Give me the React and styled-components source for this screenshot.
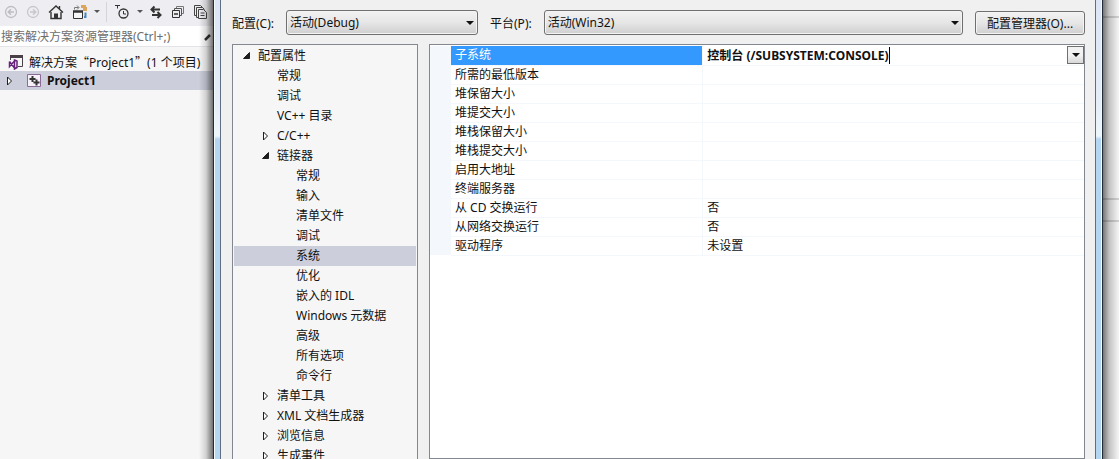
import React, { useState } from "react";
import styled, { createGlobalStyle, css } from "styled-components";

const tree = [
  { label: "配置属性", level: 0, state: "open" },
  { label: "常规", level: 1 },
  { label: "调试", level: 1 },
  { label: "VC++ 目录", level: 1 },
  { label: "C/C++", level: 1, state: "closed" },
  { label: "链接器", level: 1, state: "open" },
  { label: "常规", level: 2 },
  { label: "输入", level: 2 },
  { label: "清单文件", level: 2 },
  { label: "调试", level: 2 },
  { label: "系统", level: 2 },
  { label: "优化", level: 2 },
  { label: "嵌入的 IDL", level: 2 },
  { label: "Windows 元数据", level: 2 },
  { label: "高级", level: 2 },
  { label: "所有选项", level: 2 },
  { label: "命令行", level: 2 },
  { label: "清单工具", level: 1, state: "closed" },
  { label: "XML 文档生成器", level: 1, state: "closed" },
  { label: "浏览信息", level: 1, state: "closed" },
  { label: "生成事件", level: 1, state: "closed" },
];

const properties = [
  ["所需的最低版本", ""],
  ["堆保留大小", ""],
  ["堆提交大小", ""],
  ["堆栈保留大小", ""],
  ["堆栈提交大小", ""],
  ["启用大地址", ""],
  ["终端服务器", ""],
  ["从 CD 交换运行", "否"],
  ["从网络交换运行", "否"],
  ["驱动程序", "未设置"],
];

function Arrow({ state }) {
  return (
    <svg width="9" height="10" viewBox="0 0 9 10" aria-hidden="true">
      {state === "open" && <path d="M7.5 1.5v6h-6z" fill="#1e1e1e" stroke="#1e1e1e" />}
      {state === "closed" && (
        <path d="M2.5 1l4 4-4 4z" fill="#fff" stroke="#1e1e1e" />
      )}
    </svg>
  );
}

function SolutionExplorer() {
  return (
    <Explorer>
      <Toolbar>
        <ToolButton aria-label="后退">
          <svg width="14" height="14" viewBox="0 0 14 14" fill="none" stroke="#bdbdc2">
            <circle cx="7" cy="7" r="5.5" strokeWidth="1.3" />
            <path d="M10 7H4.5M7 4.2L4.2 7 7 9.800" strokeWidth="1.5" />
          </svg>
        </ToolButton>
        <ToolButton aria-label="前进">
          <svg width="14" height="14" viewBox="0 0 14 14" fill="none" stroke="#c8c8cc">
            <circle cx="7" cy="7" r="5.5" strokeWidth="1.3" />
            <path d="M4 7h5.5M7 4.2L9.8 7 7 9.800" strokeWidth="1.5" />
          </svg>
        </ToolButton>
        <ToolButton aria-label="主页">
          <svg width="16" height="16" viewBox="0 0 16 16" fill="none" stroke="#333">
            <path d="M1 8.500L8 2l7 6.500M11.500 5V2" strokeWidth="1.4" />
            <path d="M3 8v6.500h10V8" strokeWidth="1.4" />
            <path d="M6 9.500h4V15H6z" fill="#333" stroke="none" />
          </svg>
        </ToolButton>
        <ToolButton aria-label="同步">
          <svg width="16" height="16" viewBox="0 0 16 16" fill="none">
            <path d="M2.500 5.500V3.500h4M5 1.500l2 2-2 2" stroke="#777" />
            <path d="M9 1h5v2h1v4h-4V4H9z" fill="#dca55c" />
            <path d="M13.500 8.500v4.500H12" stroke="#4a86b8" strokeWidth="2" />
            <path d="M1.500 7.500h9v7h-9z" fill="#f6f6f6" stroke="#333" />
            <path d="M1 7.500h10" stroke="#333" strokeWidth="2.500" />
          </svg>
        </ToolButton>
        <Caret />
        <Separator />
        <ToolButton aria-label="挂起的更改筛选器">
          <svg width="16" height="16" viewBox="0 0 16 16" fill="none" stroke="#333">
            <path d="M0 1.500h5M2.500 1.500V4.500" />
            <circle cx="8.500" cy="9.500" r="4.500" strokeWidth="1.3" />
            <path d="M8.500 7v3H11" />
          </svg>
        </ToolButton>
        <Caret />
        <ToolButton aria-label="与活动文档同步">
          <svg width="14" height="14" viewBox="0 0 14 14" fill="none" stroke="#333" strokeWidth="2">
            <path d="M3 4.500h8M5.500 1.500l-3 3 3 3M3 10h8M8.500 7l3 3-3 3" />
          </svg>
        </ToolButton>
        <ToolButton aria-label="全部折叠">
          <svg width="14" height="14" viewBox="0 0 14 14" fill="none" stroke="#333">
            <path d="M5.500 3.500v-2h7v7h-2" stroke="#777" />
            <path d="M3.500 5.500v-2h7v7h-2" stroke="#555" />
            <path d="M1.500 5.500h7v7h-7z" />
            <path d="M3 9h4" strokeWidth="1.5" />
          </svg>
        </ToolButton>
        <ToolButton aria-label="显示所有文件">
          <svg width="16" height="16" viewBox="0 0 16 16" fill="none" stroke="#444">
            <path d="M3.500 11.500h-2v-10h6l2 2M5.500 13.500h-2v-10h6l2 2" />
            <path d="M5.500 5.500h5l3 3v6h-8zM7.500 9h4M7.500 11.500h4" />
          </svg>
        </ToolButton>
      </Toolbar>
      <SearchBox>
        <Search aria-label="搜索" placeholder="搜索解决方案资源管理器(Ctrl+;)" />
        <svg width="8" height="14" viewBox="0 0 8 14" aria-hidden="true">
          <path d="M1 11L6 6" stroke="#333" strokeWidth="2.5" />
        </svg>
      </SearchBox>
      <SolutionList>
        <SolutionRow>
          <svg width="16" height="16" viewBox="0 0 16 16" aria-hidden="true">
            <path d="M2.500 6V2.500h12v10H10" fill="none" stroke="#4a4048" />
            <path d="M2 2.500h13" stroke="#4a4048" strokeWidth="3" />
            <path d="M1.500 7.500v5L6.500 7M1.500 7.500l5 6.500M6.500 6l2.500 1v6.500L6.500 15z" fill="none" stroke="#68217a" strokeWidth="1.5" />
          </svg>
          <span>
            解决方案<Cjk>“</Cjk>Project1<Cjk>”</Cjk>(1 个项目)
          </span>
        </SolutionRow>
        <ProjectRow>
          <Arrow state="closed" />
          <svg width="15" height="15" viewBox="0 0 15 15" aria-hidden="true">
            <path d="M.5 1.500h13v12H.5z" fill="#f6f0f8" stroke="#8a6a96" />
            <path d="M5.500 3v6M2.500 6h6M9.500 6.500v6M6.500 9.500h6" stroke="#333" strokeWidth="2" />
          </svg>
          <span>Project1</span>
        </ProjectRow>
      </SolutionList>
    </Explorer>
  );
}

function PropertyTree() {
  const [selected, setSelected] = useState(10);
  return (
    <Tree role="tree" aria-label="配置属性">
      {tree.map((item, i) => (
        <TreeItem
          key={i}
          role="treeitem"
          aria-selected={i === selected}
          $level={item.level}
          $selected={i === selected}
          onClick={() => setSelected(i)}
        >
          <Arrow state={item.state} />
          <span>{item.label}</span>
        </TreeItem>
      ))}
    </Tree>
  );
}

function PropertyGrid() {
  const [subsystem, setSubsystem] = useState("控制台 (/SUBSYSTEM:CONSOLE)");
  return (
    <GridPanel>
      <Grid>
        <thead>
          <tr>
            <GutterHead />
            <NameHead />
            <th />
          </tr>
        </thead>
        <tbody>
          <tr>
            <Gutter />
            <NameCell $selected>
              <label htmlFor="subsystem">子系统</label>
            </NameCell>
            <ValueCell>
              <Editor>
                <EditorInput
                  id="subsystem"
                  value={subsystem}
                  onChange={(e) => setSubsystem(e.target.value)}
                />
                <TextCursor />
                <DropButton aria-label="展开">
                  <Caret />
                </DropButton>
              </Editor>
            </ValueCell>
          </tr>
          {properties.map(([name, value]) => (
            <tr key={name}>
              <Gutter />
              <NameCell>{name}</NameCell>
              <ValueCell>{value}</ValueCell>
            </tr>
          ))}
        </tbody>
      </Grid>
    </GridPanel>
  );
}

function App() {
  return (
    <Window>
      <GlobalStyle />
      <SolutionExplorer />
      <DialogFrame>
        <Dialog>
          <ConfigBar>
            <label htmlFor="config">配置(C):</label>
            <Combo $width="192px">
              <select id="config">
                <option>活动(Debug)</option>
              </select>
              <Caret />
            </Combo>
            <label htmlFor="platform">平台(P):</label>
            <Combo>
              <select id="platform">
                <option>活动(Win32)</option>
              </select>
              <Caret />
            </Combo>
            <ManagerButton>配置管理器(O)...</ManagerButton>
          </ConfigBar>
          <Panels>
            <PropertyTree />
            <PropertyGrid />
          </Panels>
        </Dialog>
      </DialogFrame>
      <Backdrop>
        <BackdropLine $space={16} />
        <BackdropLine $space={180} />
        <BackdropLine $space={20} />
      </Backdrop>
    </Window>
  );
}

const GlobalStyle = createGlobalStyle`
  * {
    box-sizing: border-box;
  }
  body {
    margin: 0;
    overflow: hidden;
  }
  body, button, input, select {
    font-family: "Noto Sans", "Noto Sans CJK SC", sans-serif;
    font-size: 12px;
    color: #111;
  }
`;

const Window = styled.div`
  display: flex;
  height: 100vh;
  overflow: hidden;
  background: #f6f6f6;
`;

const Explorer = styled.aside`
  position: relative;
  flex: 0 0 213px;
  display: flex;
  flex-direction: column;
  overflow: hidden;
  &::after {
    content: "";
    position: absolute;
    inset: 0 0 0 auto;
    width: 14px;
    background: linear-gradient(to right, transparent, rgba(0, 0, 0, 0.15) 50%, rgba(0, 0, 0, 0.55));
    pointer-events: none;
  }
`;

const Toolbar = styled.div`
  display: flex;
  align-items: center;
  gap: 8px;
  height: 26px;
  flex-shrink: 0;
  padding: 0 4px 3px;
  background: #eeeef2;
`;

const ToolButton = styled.button`
  display: flex;
  padding: 0;
  border: 0;
  background: none;
`;

const Caret = styled.span`
  flex: none;
  border: solid transparent;
  border-width: 4px 4px 0;
  border-top-color: #111;
  pointer-events: none;
  ${Toolbar} & {
    margin: 0 -2px;
    border-width: 3px 3px 0;
    border-top-color: #555;
  }
`;

const Separator = styled.span`
  width: 1px;
  height: 20px;
  background: #d4d4da;
`;

const SearchBox = styled.div`
  display: flex;
  align-items: center;
  height: 21px;
  flex-shrink: 0;
  padding: 0 1px;
  border-bottom: 1px solid #e4e4e8;
  background: #fff;
`;

const Search = styled.input`
  flex: 1;
  min-width: 0;
  padding: 0;
  border: 0;
  background: none;
  &::placeholder {
    color: #6d6d6d;
    opacity: 1;
  }
`;

const SolutionList = styled.div`
  padding-top: 5px;
`;

const SolutionRow = styled.div`
  display: flex;
  align-items: center;
  gap: 5px;
  height: 19px;
  padding-left: 8px;
  white-space: nowrap;
`;

const ProjectRow = styled(SolutionRow)`
  padding-left: 5px;
  background: #cccedb;
  font-weight: 700;
  svg + svg {
    margin-left: 8px;
  }
`;

const Cjk = styled.span`
  font-family: "Noto Sans CJK SC", sans-serif;
`;

const glass = css`
  background: linear-gradient(#dbe5f5, #e4edf8 100px, #eef6fc 136px, #b5d6f1 139px);
`;

const DialogFrame = styled.div`
  flex: 1;
  min-width: 0;
  display: flex;
  padding: 0 6px;
  border: solid #222c38;
  border-width: 0 1px;
  box-shadow: inset 1px 0 #f4f9fd, inset -1px 0 #f4f9fd;
  ${glass}
`;

const Dialog = styled.main`
  flex: 1;
  min-width: 0;
  display: flex;
  flex-direction: column;
  padding: 10px 10px 0 11px;
  border: solid #5d6f80;
  border-width: 0 1px;
  background: #f0f0f0;
`;

const ConfigBar = styled.div`
  display: flex;
  align-items: center;
  gap: 12px;
  height: 25px;
  flex-shrink: 0;
  white-space: nowrap;
`;

const buttonFace = css`
  border: 1px solid #707070;
  border-radius: 3px;
  background: linear-gradient(#f2f2f2, #e6e6e6 50%, #cfcfcf);
  box-shadow: inset 0 0 0 1px #f4f4f4;
`;

const Combo = styled.div`
  position: relative;
  flex: ${(p) => (p.$width ? `0 0 ${p.$width}` : "1")};
  select {
    display: block;
    width: 100%;
    height: 25px;
    padding: 0 3px;
    appearance: none;
    ${buttonFace}
  }
  ${Caret} {
    position: absolute;
    right: 4px;
    top: 11px;
  }
`;

const ManagerButton = styled.button`
  width: 110px;
  height: 24px;
  padding: 0;
  ${buttonFace}
`;

const Panels = styled.div`
  flex: 1;
  min-height: 0;
  display: flex;
  gap: 11px;
  padding-top: 9px;
`;

const Tree = styled.ul`
  flex: 0 0 186px;
  margin: 0;
  padding: 1px;
  border: 1px solid #828790;
  border-bottom: 0;
  background: #f6f6f6;
  list-style: none;
  overflow: hidden;
`;

const TreeItem = styled.li`
  display: flex;
  align-items: center;
  gap: 7px;
  height: 20px;
  padding-left: ${(p) => 8 + p.$level * 19}px;
  line-height: 18px;
  white-space: nowrap;
  background: ${(p) => (p.$selected ? "#cccedb" : "transparent")};
`;

const GridPanel = styled.div`
  flex: 1;
  min-width: 0;
  padding-top: 1px;
  border: 1px solid #828790;
  background: #fff;
  overflow: hidden;
`;

const Grid = styled.table`
  width: 100%;
  table-layout: fixed;
  border-collapse: collapse;
  th {
    height: 0;
    padding: 0;
  }
  td {
    height: 19px;
    padding: 0 3px 0 4px;
    line-height: 18px;
    white-space: nowrap;
  }
`;

const GutterHead = styled.th`
  width: 21px;
`;

const NameHead = styled.th`
  width: 38.5%;
`;

const Gutter = styled.td`
  background: #f4f7fc;
`;

const NameCell = styled.td`
  border-bottom: 1px solid #f4f7fc;
  ${(p) =>
    p.$selected &&
    css`
      background: #3399ff;
      color: #fff;
    `}
`;

const ValueCell = styled.td`
  border-left: 1px solid #f4f7fc;
  border-bottom: 1px solid #f4f7fc;
`;

const Editor = styled.div`
  display: flex;
  align-items: center;
  height: 18px;
  margin-right: -3px;
`;

const EditorInput = styled.input`
  field-sizing: content;
  min-width: 0;
  height: 18px;
  padding: 0;
  border: 0;
  outline: 0;
  font-weight: 700;
`;

const TextCursor = styled.span`
  width: 1px;
  height: 17px;
  background: #000;
`;

const DropButton = styled.button`
  display: flex;
  align-items: center;
  justify-content: center;
  width: 17px;
  height: 18px;
  margin-left: auto;
  padding: 0;
  border: 1px solid #707070;
  background: linear-gradient(#f2f2f2 50%, #d8d8d8);
`;

const Backdrop = styled.div`
  flex: 0 0 16px;
  background: linear-gradient(to right, #777, #c4c4c4 40%, #f6f6f6);
`;

const BackdropLine = styled.div`
  height: 2px;
  margin-top: ${(p) => p.$space}px;
  background: rgba(0, 0, 0, 0.15);
`;

export default App;
